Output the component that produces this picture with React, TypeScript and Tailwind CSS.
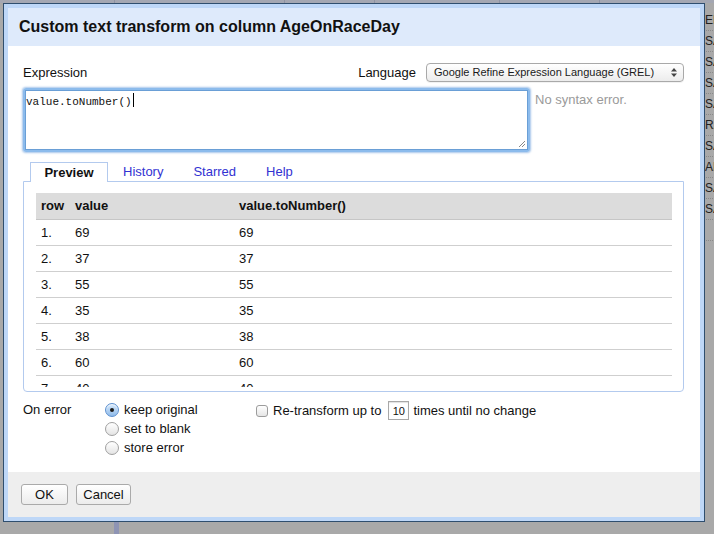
import React from "react";

const SANS = { fontFamily: '"Liberation Sans", Arial, Helvetica, sans-serif' };
const MONO = { fontFamily: '"Liberation Mono", "Courier New", monospace' };

function Radio({ checked }: { checked?: boolean }) {
  return checked ? (
    <span className="flex h-[14px] w-[14px] items-center justify-center rounded-full border border-[#5b8fcf] bg-gradient-to-b from-[#d7e9fb] to-[#8fbbea] shadow-[inset_0_1px_1px_rgba(255,255,255,0.8)]">
      <span className="h-[4px] w-[4px] rounded-full bg-[#1a1a1a]" />
    </span>
  ) : (
    <span className="h-[14px] w-[14px] rounded-full border border-[#a0a0a0] bg-gradient-to-b from-white to-[#e4e4e4]" />
  );
}

export default function App() {
  const rows = [
    ["1.", "69"],
    ["2.", "37"],
    ["3.", "55"],
    ["4.", "35"],
    ["5.", "38"],
    ["6.", "60"],
    ["7.", "40"],
  ];
  const bgCells = ["EN", "SA", "SA", "SA", "SA", "RA", "SA", "AN", "SA", "SA", ""];

  return (
    <div className="relative h-[534px] w-[714px] overflow-hidden bg-[#a9a9a9]" style={SANS}>
      {/* background grid behind the dialog */}
      <div className="flex h-[3px] w-full bg-[#a4a7b2]">
        <div className="w-[115px] border-r border-[#8f93a3]" />
        <div className="w-[170px] border-r border-[#8f93a3]" />
        <div className="w-[90px] border-r border-[#8f93a3]" />
        <div className="w-[125px] border-r border-[#8f93a3]" />
        <div className="w-[100px] border-r border-[#8f93a3]" />
        <div className="flex-1" />
      </div>
      <div className="absolute left-[703px] top-[10px] flex w-[11px] flex-col overflow-hidden">
        {bgCells.map((t, i) => (
          <div
            key={i}
            className="h-[21px] w-[20px] border-b border-dotted border-[#8a8a8a] pl-[2px] text-[12px] leading-[21px] text-[#222]"
          >
            {t}
          </div>
        ))}
      </div>
      <div className="absolute left-[114px] top-[518px] h-[20px] w-[5px] bg-[#8e94b4]" />

      {/* dialog */}
      <div className="absolute left-[3px] top-[3px] w-[702px] border border-[#2f4e6e] bg-[#bed7f7] p-[4px]">
        <div className="flex h-[509px] flex-col bg-white">
          {/* header */}
          <div className="flex h-[38px] items-center bg-[#deeafb] pl-[11px] text-[16px] font-bold text-[#111]">
            Custom text transform on column AgeOnRaceDay
          </div>

          {/* body */}
          <div className="flex flex-1 flex-col pl-[15px] pr-[16px] pt-[17px] text-[13px] text-[#111]">
            <div className="flex h-[19px] items-center justify-between">
              <span>Expression</span>
              <div className="flex items-center">
                <span className="mr-[10px]">Language</span>
                <div className="flex h-[19px] w-[258px] items-center justify-between rounded-[4px] border border-[#a9a9a9] bg-gradient-to-b from-white to-[#ececec] pl-[7px] pr-[6px] text-[11px] text-[#1a1a1a] shadow-[0_1px_0_rgba(0,0,0,0.05)]">
                  <span>Google Refine Expression Language (GREL)</span>
                  <svg width="6" height="9" viewBox="0 0 6 9">
                    <path d="M0 3.5 L3 0 L6 3.5 Z" fill="#444" />
                    <path d="M0 5.5 L3 9 L6 5.5 Z" fill="#444" />
                  </svg>
                </div>
              </div>
            </div>

            <div className="mt-[6px] flex">
              <div className="relative h-[64px] w-[507px] rounded-[3px] border-[2px] border-[#8cbbec] p-0 shadow-[0_0_2px_1px_rgba(110,160,220,0.6)]">
                <div className="h-full w-full border border-[#6a9fd6] pl-[0px] pt-0 text-[11px] leading-[14px] text-[#111]" style={MONO}>
                  value.toNumber()
                  <span className="ml-[1px] inline-block h-[14px] w-[1px] translate-y-[2px] bg-black" />
                </div>
                <svg className="absolute bottom-[2px] right-[2px]" width="8" height="8" viewBox="0 0 8 8">
                  <path d="M1 7 L7 1 M4 7 L7 4" stroke="#888" strokeWidth="1" />
                </svg>
              </div>
              <span className="ml-[5px] mt-[2px] text-[#9a9a9a]">No syntax error.</span>
            </div>

            {/* tabs */}
            <div className="mt-[10px] flex h-[20px] items-stretch pl-[7px]">
              <div className="relative z-10 flex w-[78px] items-center justify-center border border-b-0 border-[#b3caee] bg-white font-bold text-[#111]">
                Preview
              </div>
              <div className="flex items-center px-[15px] text-[#3232d2]">History</div>
              <div className="flex items-center px-[15px] text-[#3232d2]">Starred</div>
              <div className="flex items-center px-[15px] text-[#3232d2]">Help</div>
            </div>
            <div className="-mt-px h-[211px] w-[661px] rounded-b-[4px] border border-[#b3caee] pl-[12px] pr-[11px] pt-[11px]">
              <div className="h-[194px] overflow-hidden">
                <div className="flex h-[27px] border-b border-[#c6c6c6] bg-[#dcdcdc] font-bold">
                  <div className="flex w-[34px] items-center pl-[5px]">row</div>
                  <div className="flex w-[164px] items-center pl-[5px]">value</div>
                  <div className="flex flex-1 items-center pl-[5px]">value.toNumber()</div>
                </div>
                {rows.map(([n, v]) => (
                  <div key={n} className="flex h-[26px] border-b border-[#cfcfcf]">
                    <div className="flex w-[34px] items-center pl-[5px]">{n}</div>
                    <div className="flex w-[164px] items-center pl-[5px]">{v}</div>
                    <div className="flex flex-1 items-center pl-[5px]">{v}</div>
                  </div>
                ))}
              </div>
            </div>

            {/* on error */}
            <div className="mt-[8px] flex leading-[19px]">
              <div className="w-[82px]">On error</div>
              <div className="flex w-[151px] flex-col">
                <div className="flex h-[19px] items-center gap-[5px]">
                  <Radio checked />
                  <span>keep original</span>
                </div>
                <div className="flex h-[19px] items-center gap-[5px]">
                  <Radio />
                  <span>set to blank</span>
                </div>
                <div className="flex h-[19px] items-center gap-[5px]">
                  <Radio />
                  <span>store error</span>
                </div>
              </div>
              <div className="flex h-[21px] items-center">
                <span className="h-[12px] w-[12px] rounded-[3px] border border-[#9c9c9c] bg-gradient-to-b from-white to-[#e6e6e6]" />
                <span className="ml-[5px]">Re-transform up to</span>
                <span className="ml-[7px] mr-[4px] flex h-[19px] w-[21px] items-end justify-center border border-[#a8a8a8] pb-[1px] text-[11px] leading-[13px] shadow-[inset_0_1px_1px_rgba(0,0,0,0.12)]">
                  10
                </span>
                <span>times until no change</span>
              </div>
            </div>
          </div>

          {/* footer */}
          <div className="flex h-[45px] items-start gap-[8px] bg-[#eeeeee] pl-[13px] pt-[12px] text-[13px] text-[#111]">
            <button className="flex h-[21px] w-[47px] items-center justify-center rounded-[3px] border border-[#aaaaaa] bg-gradient-to-b from-white to-[#ececec]">
              OK
            </button>
            <button className="flex h-[21px] w-[55px] items-center justify-center rounded-[3px] border border-[#aaaaaa] bg-gradient-to-b from-white to-[#ececec]">
              Cancel
            </button>
          </div>
        </div>
      </div>
    </div>
  );
}
